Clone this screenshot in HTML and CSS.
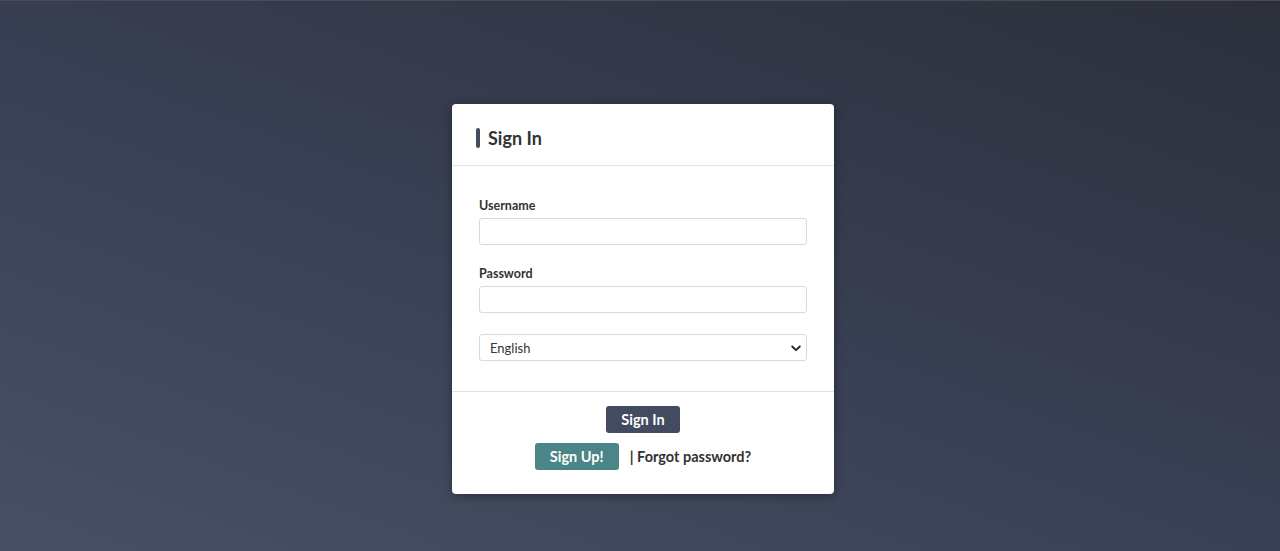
FILE: index.html
```html
<!DOCTYPE html>
<html lang="en">
<head>
<meta charset="utf-8">
<title>Sign In</title>
<link rel="stylesheet" href="styles.css">
</head>
<body>
<div class="page">
  <div class="card">
    <div class="card-header">
      <span class="title-bar"></span>
      <h1 class="title">Sign In</h1>
    </div>
    <div class="card-body">
      <div class="group">
        <label class="label" for="username">Username</label>
        <input class="field" id="username" type="text">
      </div>
      <div class="group">
        <label class="label" for="password">Password</label>
        <input class="field" id="password" type="password">
      </div>
      <div class="select-wrap">
        <select class="field select">
          <option>English</option>
        </select>
        <svg class="chev" width="10" height="7" viewBox="0 0 10 7"><path d="M1.2 1.5 L5 5.2 L8.8 1.5" fill="none" stroke="#222" stroke-width="1.8" stroke-linecap="round" stroke-linejoin="round"/></svg>
      </div>
    </div>
    <div class="card-footer">
      <button class="btn btn-dark" type="button">Sign In</button>
      <div class="row">
        <button class="btn btn-teal" type="button">Sign Up!</button>
        <a class="forgot" href="#">| Forgot password?</a>
      </div>
    </div>
  </div>
</div>
</body>
</html>
```

FILE: styles.css
```css
html, body {
  margin: 0;
  padding: 0;
  height: 100%;
}
body {
  font-family: Lato, "Noto Sans", sans-serif;
  background: linear-gradient(20deg, #475064 0%, #3a4155 45%, #2b303b 100%);
  border-top: 1px solid #4a4d50;
  box-sizing: border-box;
  overflow: hidden;
}
.page {
  display: flex;
  justify-content: center;
  padding-top: 103px;
  padding-left: 6px;
}
.card {
  width: 382px;
  background: #fff;
  border-radius: 4px;
  box-shadow: 0 2px 10px rgba(0, 0, 0, 0.35);
  color: #333;
}
.card-header {
  height: 62px;
  box-sizing: border-box;
  border-bottom: 1px solid #e3e3e3;
  display: flex;
  align-items: center;
  padding: 0 24px;
  padding-top: 6px;
}
.title-bar {
  width: 4px;
  height: 20px;
  border-radius: 2px;
  background: #434b60;
  margin-right: 8px;
}
.title {
  margin: 0;
  font-size: 18px;
  font-weight: 700;
  color: #333;
  line-height: 20px;
}
.card-body {
  padding: 32px 27px 30px;
}
.group {
  margin-bottom: 21px;
}
.label {
  display: block;
  font-size: 12.5px;
  font-weight: 700;
  line-height: 15px;
  margin-bottom: 5px;
  color: #333;
}
.field {
  display: block;
  box-sizing: border-box;
  width: 328px;
  height: 27px;
  margin: 0;
  border: 1px solid #d9d9d9;
  border-radius: 3px;
  background: #fff;
  font-family: inherit;
  font-size: 13px;
  color: #333;
  padding: 0 10px;
  outline: none;
}
.select-wrap {
  position: relative;
  width: 328px;
}
.select {
  -webkit-appearance: none;
  appearance: none;
  padding-left: 10px;
}
.chev {
  position: absolute;
  right: 6px;
  top: 11px;
  pointer-events: none;
}
.card-footer {
  border-top: 1px solid #e3e3e3;
  padding: 14px 0 24px;
  display: flex;
  flex-direction: column;
  align-items: center;
  gap: 10px;
}
.btn {
  height: 27px;
  border: none;
  border-radius: 3px;
  font-family: inherit;
  font-size: 14.5px;
  font-weight: 700;
  color: #fff;
  padding: 0;
  margin: 0;
  white-space: nowrap;
  cursor: pointer;
}
.btn-dark {
  background: #424b5f;
  width: 74px;
}
.btn-teal {
  background: #4a8587;
  width: 84px;
}
.row {
  display: flex;
  align-items: center;
  gap: 11px;
}
.forgot {
  font-size: 14.5px;
  font-weight: 700;
  color: #333;
  text-decoration: none;
}
```
